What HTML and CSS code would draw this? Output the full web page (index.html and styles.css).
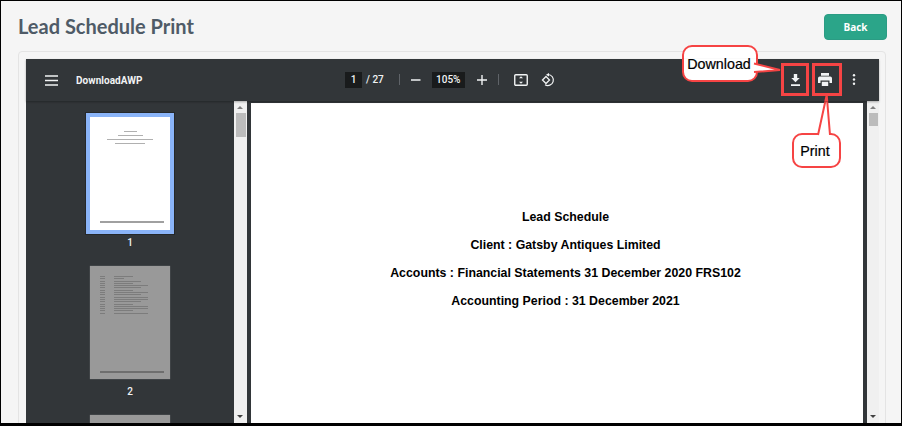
FILE: index.html
```html
<!DOCTYPE html>
<html lang="en">
<head>
<meta charset="utf-8">
<title>Lead Schedule Print</title>
<link rel="stylesheet" href="styles.css">
</head>
<body>
<div class="frame">
  <header class="page-head">
    <h1 class="page-title">Lead Schedule Print</h1>
    <button class="back-btn">Back</button>
  </header>
  <section class="card">
    <div class="viewer">
      <div class="toolbar">
        <div class="tb-left">
          <svg class="ic-menu" width="13" height="11" viewBox="0 0 13 11"><path d="M0 1h13M0 5.500h13M0 10h13" stroke="#f1f3f4" stroke-width="1.500"/></svg>
          <span class="doc-name">DownloadAWP</span>
        </div>
        <div class="tb-center">
          <span class="num-box page-box">1</span>
          <span class="page-total">/ 27</span>
          <span class="sep sep-a"></span>
          <svg class="ic-minus" width="10" height="10" viewBox="0 0 10 10"><path d="M0 5h9.500" stroke="#f1f3f4" stroke-width="1.500"/></svg>
          <span class="num-box zoom-box">105%</span>
          <svg class="ic-plus" width="10" height="10" viewBox="0 0 10 10"><path d="M0 5h10M5 0v10" stroke="#f1f3f4" stroke-width="1.400"/></svg>
          <span class="sep sep-b"></span>
          <svg class="ic-fit" width="14" height="12" viewBox="0 0 14 12"><rect x=".75" y=".75" width="12.500" height="10.500" rx="1" fill="none" stroke="#f1f3f4" stroke-width="1.400"/><path d="M7 2.300l2 2H5zM7 9.700l2-2H5z" fill="#f1f3f4"/></svg>
          <svg class="ic-rotate" width="14" height="14" viewBox="0 0 14 14"><path d="M5 3.500 8.500 7 5 10.500 1.500 7z" fill="none" stroke="#f1f3f4" stroke-width="1.300"/><path d="M7 1.500A5.500 5.500 0 1 1 4 11.700" fill="none" stroke="#f1f3f4" stroke-width="1.200"/><path d="M8 0v3.400L5 1.700z" fill="#f1f3f4"/></svg>
        </div>
        <div class="tb-right">
          <svg class="ic-download" width="9" height="12" viewBox="0 0 9 12"><path d="M2.800 0h3.400v4h2.500L4.500 8.300.3 4h2.500zM0 10.200h9V12H0z" fill="#f1f3f4"/></svg>
          <svg class="ic-print" width="14" height="13" viewBox="0 0 14 13"><path d="M3 0h8v2.800H3zM1.800 3.500h10.400A1.800 1.800 0 0 1 14 5.300V10h-2.500V7.600h-9V10H0V5.300a1.800 1.800 0 0 1 1.800-1.800zM3.800 8.700h6.400V13H3.800z" fill="#f1f3f4"/></svg>
          <svg class="ic-more" width="4" height="11" viewBox="0 0 4 11"><circle cx="2" cy="1.300" r="1.200" fill="#f1f3f4"/><circle cx="2" cy="5.500" r="1.200" fill="#f1f3f4"/><circle cx="2" cy="9.700" r="1.200" fill="#f1f3f4"/></svg>
        </div>
      </div>
      <div class="viewer-body">
        <aside class="thumbs">
          <div class="thumb-list">
            <div class="thumb thumb-active">
              <div class="sheet">
                <div class="mini-lines"><i class="ml w1"></i><i class="ml w2"></i><i class="ml w3"></i><i class="ml w4"></i></div>
                <i class="foot-line"></i>
              </div>
            </div>
            <span class="thumb-num">1</span>
            <div class="thumb">
              <div class="sheet sheet-dim">
                <div class="toc">
                  <div class="toc-col"><i></i><i></i><i></i><i></i><i></i><i></i><i></i><i></i><i></i><i></i><i></i><i></i><i></i><i></i><i></i><i></i><i></i></div>
                  <div class="toc-col toc-main"><i></i><i></i><i></i><i></i><i></i><i></i><i></i><i></i><i></i><i></i><i></i><i></i><i></i><i></i><i></i><i></i><i></i></div>
                </div>
                <i class="foot-line"></i>
              </div>
            </div>
            <span class="thumb-num">2</span>
            <div class="thumb"><div class="sheet sheet-dim"></div></div>
          </div>
        </aside>
        <div class="scrollbar scrollbar-side">
          <span class="arrow arrow-up"></span><span class="bar-thumb"></span><span class="arrow arrow-down"></span>
        </div>
        <main class="doc-pane">
          <div class="page">
            <p class="doc-line">Lead Schedule</p>
            <p class="doc-line">Client : Gatsby Antiques Limited</p>
            <p class="doc-line">Accounts : Financial Statements 31 December 2020 FRS102</p>
            <p class="doc-line">Accounting Period : 31 December 2021</p>
          </div>
        </main>
        <div class="scrollbar scrollbar-main">
          <span class="arrow arrow-up"></span><span class="bar-thumb bar-thumb-small"></span><span class="arrow arrow-down"></span>
        </div>
      </div>
    </div>
  </section>
  <span class="hl hl-download"></span>
  <span class="hl hl-print"></span>
  <span class="callout callout-download">Download</span>
  <span class="callout callout-print">Print</span>
  <svg class="tails" width="902" height="426" viewBox="0 0 902 426">
    <path d="M754 63.500 780 70 754 72" fill="#fff" stroke="#f64444" stroke-width="2"/>
    <path d="M818 135 826.700 95 830 135" fill="#fff" stroke="#f64444" stroke-width="2"/>
  </svg>
</div>
</body>
</html>
```
FILE: styles.css
```css
* { box-sizing: border-box; }
html, body { margin: 0; padding: 0; }
body { width: 902px; height: 426px; overflow: hidden; font-family: "Liberation Sans", Arial, sans-serif; }
.frame {
  position: relative;
  width: 902px;
  height: 426px;
  background: #f5f5f5;
  border: 1px solid #000;
  border-bottom-width: 3px;
  overflow: hidden;
  padding: 12px 14px 0 17px;
}
.page-head { display: flex; justify-content: space-between; align-items: center; height: 27px; }
.page-title { margin: 0; font: 700 20px/27px Lato, sans-serif; color: #4f5b67; }
.back-btn {
  width: 63px; height: 26px; border: 1px solid #2b9c84; border-radius: 4px; background: #2ba589;
  color: #fff; font: 700 10px "Open Sans", sans-serif; padding: 0;
}
.card {
  margin-top: 11px;
  margin-right: 1px;
  height: 380px;
  background: #f5f5f5;
  border: 1px solid #e4e4e4;
  border-radius: 4px;
  padding: 7px 6px 0 7px;
}
.viewer { height: 364px; background: #323639; display: flex; flex-direction: column; }
.toolbar { height: 42px; position: relative; display: flex; align-items: center; box-shadow: 0 1px 2px rgba(0,0,0,.3); z-index: 1; flex: none; }
.tb-left { display: flex; align-items: center; padding-left: 19px; gap: 18px; }
.doc-name { font: 700 10px Roboto, sans-serif; color: #f1f3f4; letter-spacing: .05px; }
.tb-center { position: absolute; left: 319px; top: 12px; height: 17px; display: flex; align-items: center; color: #f1f3f4; font: 500 10px Roboto, sans-serif; }
.num-box { height: 16px; background: #191b1c; display: flex; align-items: center; justify-content: center; }
.page-box { width: 17px; }
.page-total { margin-left: 4px; }
.sep { width: 1px; height: 11px; background: #5f6368; }
.sep-a { margin-left: 15px; }
.ic-minus { margin-left: 11px; }
.zoom-box { width: 33px; margin-left: 11px; }
.ic-plus { margin-left: 12px; }
.sep-b { margin-left: 11px; }
.ic-fit { margin-left: 15px; }
.ic-rotate { margin-left: 13px; }
.tb-right { position: absolute; left: 765px; top: 14px; display: flex; align-items: center; }
.ic-print { margin-left: 18px; }
.ic-more { margin-left: 20px; }
.viewer-body { flex: 1; display: flex; min-height: 0; }
.thumbs { width: 208px; overflow: hidden; flex: none; }
.thumb-list { padding-top: 16px; display: flex; flex-direction: column; align-items: center; width: 208px; }
.thumb { flex: none; width: 80px; height: 113px; }
.thumb-active { box-shadow: 0 0 0 4px #8ab4f8, 0 0 0 5px rgba(0,0,0,.25); }
.sheet { position: relative; height: 100%; background: #fff; padding-top: 14px; }
.sheet-dim { background: #999; box-shadow: 0 0 1px rgba(255,255,255,.4); padding-top: 10px; }
.mini-lines { display: flex; flex-direction: column; align-items: center; gap: 3px; }
.ml { display: block; height: 1px; background: #b0b0b0; }
.w1 { width: 13px; } .w2 { width: 25px; } .w3 { width: 46px; } .w4 { width: 30px; }
.foot-line { position: absolute; left: 10px; right: 6px; bottom: 7px; height: 2px; background: #a0a0a0; }
.sheet-dim .foot-line { background: #6e6e6e; bottom: 6px; }
.thumb-num { display: block; height: 36px; padding-top: 7px; font: 500 10px Roboto, sans-serif; color: #f1f3f4; }
.toc { display: flex; gap: 9px; padding-left: 10px; }
.toc-col { width: 5px; display: flex; flex-direction: column; gap: 1.300px; }
.toc-col i { display: block; height: 1px; background: #7c7c7c; }
.toc-main { width: 34px; }
.toc-main i:nth-child(3n) { width: 78%; }
.toc-main i:nth-child(3n+1) { width: 55%; }
.toc-main i:nth-child(5n) { width: 100%; }
.toc-main i:nth-child(2) { width: 28%; }
.scrollbar { flex: none; background: #f0f0f0; position: relative; }
.scrollbar-side { width: 13px; margin-right: 4px; }
.scrollbar-main { width: 12px; margin-left: 4px; }
.arrow { position: absolute; left: 3px; width: 0; height: 0; border-left: 3px solid transparent; border-right: 3px solid transparent; }
.arrow-up { top: 5px; border-bottom: 3px solid #808080; }
.arrow-down { bottom: 5px; border-top: 3px solid #404040; }
.bar-thumb { position: absolute; left: 2px; right: 1px; top: 12px; height: 24px; background: #bcbcbc; }
.bar-thumb-small { height: 13px; }
.doc-pane { flex: 1; min-width: 0; overflow: hidden; padding-top: 2px; }
.page { height: 100%; background: #fff; padding-top: 107px; padding-left: 17px; text-align: center; }
.doc-line { margin: 0 0 14px; font: 700 12.350px/14px "Liberation Sans", sans-serif; color: #000; }
.hl { position: absolute; border: 3px solid #f64444; }
.hl-download { left: 780px; top: 62px; width: 28px; height: 33px; }
.hl-print { left: 811px; top: 62px; width: 30px; height: 33px; }
.tails { position: absolute; left: -1px; top: -1px; pointer-events: none; }
.callout {
  position: absolute; background: #fff; border: 2.500px solid #f64444; border-radius: 10px;
  font: 400 14.300px "Liberation Sans", sans-serif; color: #000; display: flex; align-items: center; justify-content: center;
  -webkit-text-stroke: .2px #000;
}
.callout-download { left: 681px; top: 44px; width: 76px; height: 37px; padding-right: 2px; }
.callout-print { left: 791px; top: 132px; width: 49px; height: 35px; padding-right: 3px; }
```
